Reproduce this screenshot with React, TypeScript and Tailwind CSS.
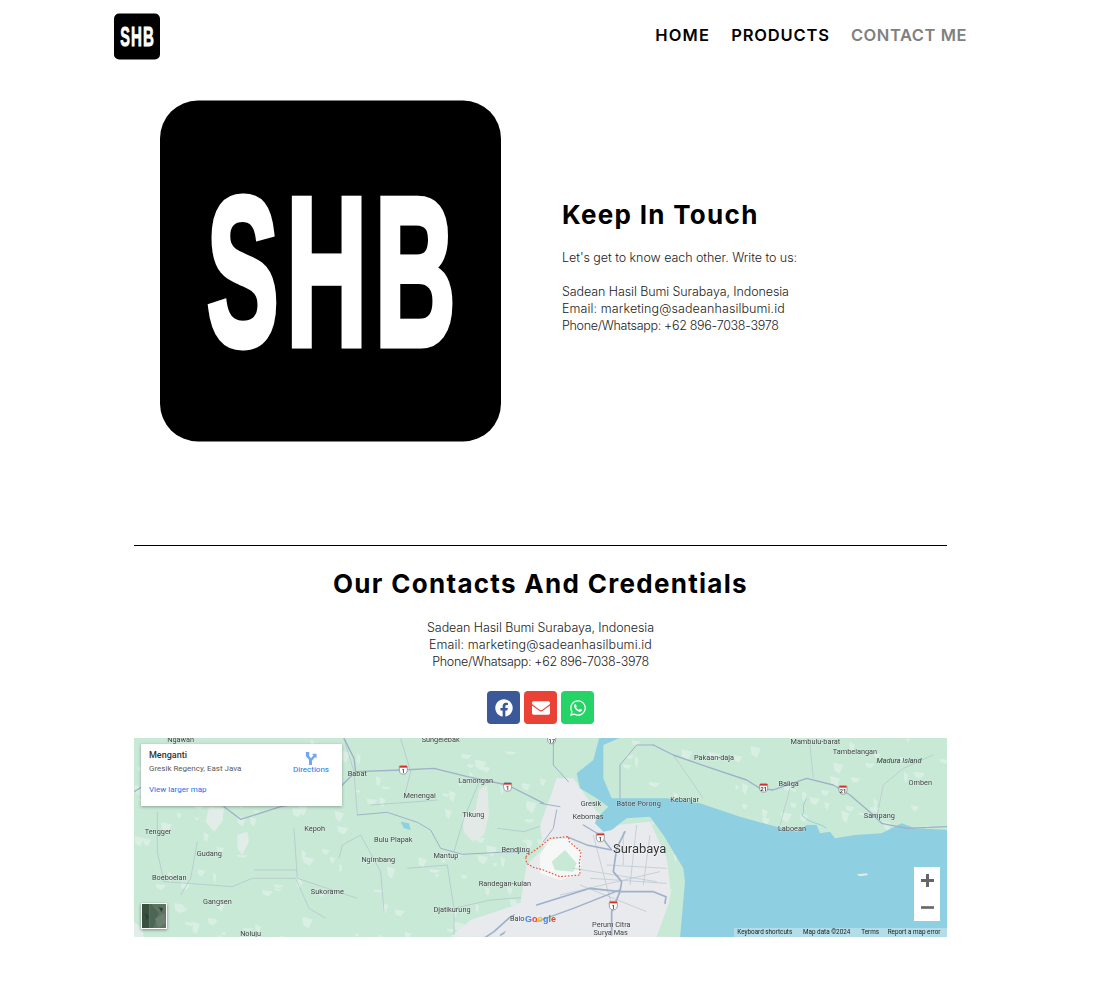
import React from 'react';
import { FaFacebook, FaEnvelope, FaWhatsapp } from 'react-icons/fa';

const contactLines = [
  { text: 'Sadean Hasil Bumi Surabaya, Indonesia', tracking: 'tracking-[-0.09px]' },
  { text: 'Email: marketing@sadeanhasilbumi.id', tracking: 'tracking-[0.1px]' },
  { text: 'Phone/Whatsapp: +62 896-7038-3978', tracking: 'tracking-[-0.3px]' },
];

const Logo: React.FC<{ className: string }> = ({ className }) => (
  <svg viewBox="0 0 342 342" className={className}>
    <rect width="342" height="342" rx="38" fill="#000" />
    <g fill="#fff" stroke="#fff" strokeWidth="7" fontFamily="'Liberation Sans', sans-serif" fontWeight="700" fontSize="212">
      <text transform="translate(47 245) scale(.51 1)">S</text>
      <text transform="translate(126.5 245) scale(.53 1)">H</text>
      <text transform="translate(215.5 245) scale(.53 1)">B</text>
    </g>
  </svg>
);

type Label = [number, number, string];

const leftLabels: Label[] = [
  [140, 21, 'Ngawan'], [920, 21, 'Sungelebak'], [670, 122, 'Babat'], [1025, 143, 'Lamongan'],
  [857, 190, 'Menengai'], [1018, 245, 'Tikung'], [72, 296, 'Tengger'], [542, 287, 'Kepoh'],
  [778, 320, 'Bulu Plapak'], [226, 362, 'Gudang'], [936, 370, 'Mantup'], [733, 382, 'Ngimbang'],
  [1145, 350, 'Bendjing'], [106, 434, 'Boeboelan'], [1113, 452, 'Randegan-kulan'], [580, 476, 'Sukorame'],
  [250, 508, 'Gangsen'], [954, 532, 'Djatikurung'], [350, 604, 'Noluju'], [1150, 557, 'Balo'],
];

const rightLabels: Label[] = [
  [826, 27, 'Mambulu-barat'], [945, 56, 'Tambelangan'], [522, 75, 'Pakaan-daja'], [746, 152, 'Baliga'],
  [1141, 149, 'Omben'], [153, 212, 'Gresik'], [296, 214, 'Batoe Porong'], [434, 200, 'Kebanjar'],
  [144, 252, 'Kebomas'], [1018, 250, 'Sampang'], [756, 288, 'Laboean'], [214, 575, 'Perum Citra'],
  [212, 600, 'Surya Mas'],
];

// scattered light fields on the land
const fieldSpots = (() => {
  let seed = 17;
  const rnd = () => {
    seed = (seed * 16807) % 2147483647;
    return seed / 2147483647;
  };
  const spots: string[] = [];
  for (let i = 0; i < 260; i++) {
    const x = rnd() * 813;
    const y = rnd() * 199;
    const w = 3 + rnd() * 9;
    const h = 2 + rnd() * 8;
    spots.push(`M${x} ${y}l${w} ${h * 0.3}l${-w * 0.4} ${h}l${-w * 0.5} ${-h * 0.4}z`);
  }
  return spots;
})();

const Shield: React.FC<{ x: number; y: number; t: string }> = ({ x, y, t }) => (
  <g transform={`translate(${x} ${y})`}>
    <path d="M-12-9q0-4 4-4h16q4 0 4 4v10q0 6-6 11h-12q-6-5-6-11z" fill="#fff" stroke="#6f7a86" strokeWidth="2" />
    <path d="M-11-12h22v5h-22z" fill="#d93025" />
    <text y="9" textAnchor="middle" fontSize="17" fontWeight="700" fill="#3c4043">{t}</text>
  </g>
);

const MapPicture: React.FC = () => (
  <svg viewBox="0 0 813 199" className="block h-full w-full" fontFamily="Roboto, sans-serif">
    <rect width="813" height="199" fill="#c9e9d7" />
    {fieldSpots.map((d) => <path key={d} d={d} fill="#d9efe4" />)}

    {/* left half, drawn in crop coordinates */}
    <g transform="translate(0 -3) scale(.3333)">
      <path d="M225 215l45 5-5 40-25 30-25-30zM310 300l30-10 5 30-20 40-15-20zM0 560l25 20 5 30H0z" fill="#e2ece8" />
      <path d="M985 250l40-25 10-60 25-15 5 90-15 60-35 20-25-30z" fill="#e3e9e7" />
      <path d="M950 605l60-50 120-40 100-40v130z" fill="#e8eaed" />
      <g fill="none" stroke="#aebfca" strokeWidth="2">
        <path d="M70 230v120l20 90 205 15 60-25 130 0 40 90 50 30" />
        <path d="M190 320l-20 110-30 50M480 280l10 150 90 30 90 30M615 370l10-40 55-30 60 110 10 120" />
        <path d="M360 405l130 0M820 400l120-10 20 130 110-25 130-10M670 240l-10-130-30-100M1040 130l-50 120-30 100" />
        <path d="M710 210l140-10 60-5M960 520v80M800 10l30 100-20 80M1090 280l80 10 60-20" />
      </g>
      <g fill="none" stroke="#9fb0c9" strokeLinecap="round" strokeLinejoin="round">
        <path d="M630 10l30 60 5 40 140-5 95-5 100 25 120 25 110 55" strokeWidth="4" />
        <path d="M0 170l25-15M270 215l50 38 120-38 90-15 95-50 35-35" strokeWidth="4" />
        <path d="M670 240l90-8 90 30 40 23 30 55 65 18 115-6 75-2" strokeWidth="3" />
        <path d="M1195 450v70l-65 25-50 45-30 20M1100 600l130-80" strokeWidth="5" />
      </g>
      <path d="M800 260l25 5 5 20-20-5z" fill="#8fcfe2" />
    </g>

    {/* right half, drawn in crop coordinates */}
    <g transform="translate(406 -3) scale(.3333)">
      <path d="M-60 510l20-120 50-50 -10-70 30-80 20-60 50 0 70 100 60 40 100-10 50 110 10 80-10 170H-120z" fill="#e8eaed" />
      <path d="M340 240l40 60 50 60 10 60-20 185h-70l40-110 20-130z" fill="#c9e9d7" />
      <path d="M0 360l30-45 55-5 40 40-5 70-60 15-60-20z" fill="#f5f8f6" />
      <path d="M35 380l40-35 35 40-10 25-55-5z" fill="#c9e9d7" />
      <path d="M180 0h80l-70 30v100l25 60 165 0 100 15 120 40 90 25 80 20 30-20 30 0 10 25 30-5 15 20 60-10 80-5 60-30 40 15 120 5 60-5V610H420l15-170-5-40-60-100-40-55-70 5-45 35-25 5-25-25 5-15 35-35-35-25-50-30-10-45 50-40z" fill="#8fcfe2" />
      <path d="M950 418l30-3 5 5-25 4z" fill="#dceee5" />
      <path d="M800 190c-20 30 0 40-15 50 30 30 50 20 75 40" fill="none" stroke="#8fcfe2" strokeWidth="3" />
      <g fill="none" stroke="#b6c2cc" strokeWidth="2">
        <path d="M250 290v100M200 390l180 10M150 430l230 15M290 270l-20 180M330 300l-20 150M120 450l200 80M750 160l-30 110M1010 250l20-100 60-50 90-40M810 30l10 100M400 60l90 130" />
        <path d="M100 400l250 40M60 480l300-70M160 300l60 230" />
      </g>
      <g fill="none" stroke="#9fb0c9" strokeLinecap="round" strokeLinejoin="round">
        <path d="M340 30l60 30 100 35 120 40 40 25 40 5 100-35 80 20 50 30 70 60 25 25 75 15 120-5" strokeWidth="4" />
        <path d="M240 190V90l50-60h50" strokeWidth="3" />
        <path d="M40 20v70l45 50M0 205l60 10" strokeWidth="3" />
        <path d="M50 225l-10 55-30 40" strokeWidth="3" />
        <path d="M80 305l60 25 75 15M130 270l50 30 35 45" strokeWidth="4" />
        <path d="M255 290l-25 50-10 70 25 30-5 30-25 60v70" strokeWidth="5" />
        <path d="M-10 510l160-50 90 10h100l38 15-3 20" strokeWidth="5" />
        <path d="M-10 560l110-40 140-55" strokeWidth="4" />
      </g>
      <path d="M-43 365L0 335l30-25 55-5 3 15 35 30-5 35 2 35-60 5-50-20-30-8-20-12z" fill="none" stroke="#e8523f" strokeWidth="3.5" strokeDasharray="5 5" />
      <Shield x={181} y={308} t="1" />
      <Shield x={671} y={159} t="21" />
      <Shield x={909} y={165} t="21" />
      <Shield x={220} y={512} t="1" />
      <Shield x={35} y={14} t="17" />
      <g fontSize="22" fill="#3c4043" textAnchor="middle" stroke="#ffffff" strokeOpacity=".55" strokeWidth="1.5" paintOrder="stroke">
        {rightLabels.map(([x, y, t]) => <text key={t} x={x} y={y}>{t}</text>)}
      </g>
      <text x="1077" y="83" fontSize="22" fontStyle="italic" fill="#3c4043" textAnchor="middle">Madura Island</text>
      <text x="299" y="354" fontSize="39" fill="#303134" textAnchor="middle" stroke="#fff" strokeOpacity=".7" strokeWidth="3" paintOrder="stroke">Surabaya</text>
      <rect x="582" y="579" width="640" height="27" fill="#f5f5f5" opacity=".35" />
      <g fontSize="19" fill="#222">
        <text x="592" y="597">Keyboard shortcuts</text>
        <text x="789" y="597">Map data ©2024</text>
        <text x="964" y="597">Terms</text>
        <text x="1043" y="597">Report a map error</text>
      </g>
    </g>

    <g transform="translate(0 -3) scale(.3333)">
      <Shield x={808} y={105} t="1" />
      <Shield x={1121} y={156} t="1" />
      <g fontSize="22" fill="#3c4043" textAnchor="middle" stroke="#ffffff" strokeOpacity=".55" strokeWidth="1.5" paintOrder="stroke">
        {leftLabels.map(([x, y, t]) => <text key={t} x={x} y={y}>{t}</text>)}
      </g>
      <text x="1173" y="561" fontSize="27" fontWeight="700" fontFamily="'Liberation Sans', sans-serif">
        <tspan fill="#4285f4">G</tspan><tspan fill="#ea4335">o</tspan><tspan fill="#fbbc05">o</tspan><tspan fill="#4285f4">g</tspan><tspan fill="#34a853">l</tspan><tspan fill="#ea4335">e</tspan>
      </text>
    </g>
  </svg>
);

const Satellite: React.FC = () => (
  <svg viewBox="0 0 26 26" className="block h-full w-full">
    <rect width="26" height="26" fill="#4d6653" />
    <path d="M0 0h8v26H0z" fill="#39503f" />
    <path d="M10 0l8 10-6 16h14V0z" fill="#5b7561" />
    <path d="M14 16l10-6 2 10-8 6z" fill="#6c7f72" />
    <path d="M8 0v26" stroke="#8a8a70" strokeWidth=".5" />
    <path d="M3 10l5 3-3 5zM18 3l5 2-2 4z" fill="#2e4234" />
  </svg>
);

export default function App() {
  return (
    <div className="min-h-[1004px] w-[1081px] bg-white font-['Inter',sans-serif] text-black">
      <nav className="flex h-[73px] items-center justify-between px-[114px]">
        <Logo className="h-[47px] w-[46px]" />
        <div className="mb-[2px] flex items-center gap-[21px] text-[16.5px] font-semibold">
          <a className="tracking-[1.2px]">HOME</a>
          <a className="tracking-[0.85px]">PRODUCTS</a>
          <a className="tracking-[0.55px] text-[#808080]">CONTACT ME</a>
        </div>
      </nav>

      <section className="flex pl-[160px] pt-[27px]">
        <Logo className="h-[342px] w-[341px]" />
        <div className="ml-[61px] pt-[99px]">
          <h1 className="text-[26px] font-bold leading-[32px] tracking-[1.3px]">Keep In Touch</h1>
          <p className="mt-[18px] text-[12.5px] font-light leading-[17px] tracking-[-0.05px] text-[#222]">Let's get to know each other. Write to us:</p>
          <div className="mt-[17px] text-[12.5px] font-light leading-[17px] text-[#222]">
            {contactLines.map((line) => <p key={line.text} className={line.tracking}>{line.text}</p>)}
          </div>
        </div>
      </section>

      <section className="mx-[134px] mt-[103px] border-t border-black pt-[21px]">
        <h2 className="text-center text-[26px] font-bold leading-[34px] tracking-[1.3px]">Our Contacts And Credentials</h2>
        <div className="mt-[18px] text-center text-[12.5px] font-light leading-[17px] text-[#222]">
          {contactLines.map((line) => <p key={line.text} className={line.tracking}>{line.text}</p>)}
        </div>
        <div className="mt-[21px] flex justify-center gap-[4px]">
          <a className="flex h-[33px] w-[33px] items-center justify-center rounded-[4px] bg-[#3b5998] text-white"><FaFacebook size={18} /></a>
          <a className="flex h-[33px] w-[33px] items-center justify-center rounded-[4px] bg-[#ea4335] text-white"><FaEnvelope size={18} /></a>
          <a className="flex h-[33px] w-[33px] items-center justify-center rounded-[4px] bg-[#25d366] text-white"><FaWhatsapp size={18} /></a>
        </div>

        <div className="relative mt-[14px] h-[199px] w-[813px] overflow-hidden font-['Roboto',sans-serif]">
          <div className="h-full w-full blur-[0.35px]">
            <MapPicture />
          </div>

          <div className="absolute left-[7px] top-[6px] h-[62px] w-[201px] bg-white shadow-[0_1px_3px_rgba(0,0,0,0.3)]">
            <p className="pl-[8px] pt-[5px] text-[9px] font-medium leading-[12px] text-[#333]">Menganti</p>
            <p className="pl-[8px] pt-[3px] text-[8px] leading-[10px] text-[#5b5b5b]">Gresik Regency, East Java</p>
            <p className="pl-[8px] pt-[11px] text-[8px] leading-[10px] text-[#1a73e8]">View larger map</p>
            <div className="absolute left-[152px] top-[8px] flex flex-col items-center">
              <svg viewBox="0 0 14 14" className="h-[13px] w-[13px]" fill="#6fa8f0">
                <path d="M2 0h3.6v4.2L7.6 6.6l2.6-3L8.6 2H13.5v5L12 5.5 8.6 9.4V14H5.4V8.4L2 4.6z" />
              </svg>
              <span className="text-[8px] leading-[10px] text-[#1a73e8]">Directions</span>
            </div>
          </div>

          <div className="absolute left-[7px] top-[165px] h-[26px] w-[26px] border border-white shadow-[0_1px_3px_rgba(0,0,0,0.4)]">
            <Satellite />
          </div>

          <div className="absolute left-[780px] top-[129px] flex h-[54px] w-[26px] flex-col items-center justify-around bg-white text-[#666]">
            <svg viewBox="0 0 14 14" className="h-[13px] w-[13px]" fill="currentColor"><path d="M5.4 0h3.2v5.4H14v3.2H8.6V14H5.4V8.6H0V5.4h5.4z" /></svg>
            <svg viewBox="0 0 14 14" className="h-[13px] w-[13px]" fill="currentColor"><path d="M0 5.6h14v2.8H0z" /></svg>
          </div>
        </div>
      </section>
    </div>
  );
}
